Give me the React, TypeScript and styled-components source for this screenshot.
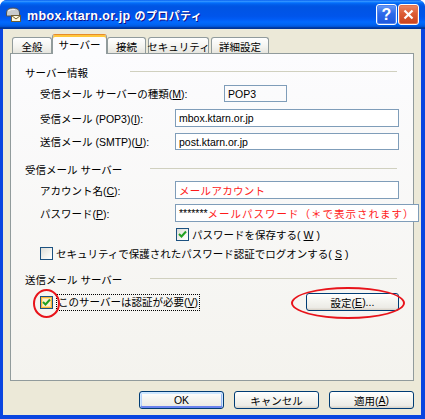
import React from 'react';
import styled, { createGlobalStyle, css } from 'styled-components';

const FONT = `"Liberation Sans", "Noto Sans CJK JP", sans-serif`;

const GlobalStyle = createGlobalStyle`
  html, body {
    margin: 0;
    padding: 0;
    background: #ffffff;
  }
  #root {
    width: 425px;
    height: 419px;
  }
`;

const Window = styled.div`
  width: 425px;
  height: 419px;
  box-sizing: border-box;
  display: flex;
  flex-direction: column;
  background: #0a45e0;
  border-radius: 7px 7px 0 0;
  overflow: hidden;
  font-family: ${FONT};
  font-size: 10.5px;
  color: #000;
`;

const TitleBar = styled.div`
  height: 29px;
  flex-shrink: 0;
  display: flex;
  align-items: center;
  padding: 0 6px 0 5px;
  background: linear-gradient(
    180deg,
    #0058ee 0%,
    #3593ff 4%,
    #288eff 6%,
    #127dff 8%,
    #036ffc 10%,
    #0262ee 14%,
    #0057e5 20%,
    #0054e3 24%,
    #0055eb 56%,
    #005bf5 66%,
    #026afe 76%,
    #0062ef 86%,
    #0052d6 92%,
    #0040ab 94%,
    #003092 100%
  );
`;

const TitleText = styled.span`
  margin-left: 5px;
  color: #fff;
  font-family: ${FONT};
  font-weight: 700;
  font-size: 12.5px;
  letter-spacing: 0.4px;
  text-shadow: 1px 1px 0 #0f1089;
  white-space: nowrap;

  small {
    font-size: 11px;
  }
`;

const CaptionButtons = styled.div`
  margin-left: auto;
  display: flex;
  gap: 1px;
`;

const CaptionButton = styled.div<{ $kind: 'help' | 'close' }>`
  width: 21px;
  height: 21px;
  box-sizing: border-box;
  border: 1px solid #fff;
  border-radius: 3px;
  display: flex;
  align-items: center;
  justify-content: center;
  color: #fff;
  font-family: ${FONT};
  font-weight: 700;
  font-size: 16px;
  ${(p) =>
    p.$kind === 'help'
      ? css`
          background: linear-gradient(180deg, #6a9cf7 0%, #2d69ea 45%, #1f57dc 100%);
          box-shadow: inset 0 0 0 1px #4d82ef;
        `
      : css`
          background: linear-gradient(180deg, #ea8a6a 0%, #dc5d36 45%, #c9431d 100%);
          box-shadow: inset 0 0 0 1px #e3714d;
        `}
`;

const Body = styled.div`
  flex: 1;
  margin: 0 4px 4px 3px;
  background: #ece9d8;
  display: flex;
  flex-direction: column;
  padding: 5px 7px 6px 7px;
  min-height: 0;
`;

const TabRow = styled.div`
  display: flex;
  align-items: flex-end;
  height: 19px;
  padding-left: 2px;
  position: relative;
  z-index: 1;
  flex-shrink: 0;
`;

const Tab = styled.div<{ $w: number; $gap: number; $active?: boolean }>`
  width: ${(p) => p.$w}px;
  margin-left: ${(p) => p.$gap}px;
  box-sizing: border-box;
  display: flex;
  align-items: center;
  justify-content: center;
  border: 1px solid #919b9c;
  border-bottom: none;
  border-radius: 3px 3px 0 0;
  white-space: nowrap;
  ${(p) =>
    p.$active
      ? css`
          height: 20px;
          margin-bottom: -1px;
          padding-bottom: 2px;
          background: #fcfcfe;
          border-top: 1px solid #e68b2c;
          box-shadow: inset 0 2px 0 #ffc73c;
          padding-top: 2px;
        `
      : css`
          height: 16px;
          padding-top: 1px;
          background: linear-gradient(180deg, #ffffff 0%, #f3f3ef 60%, #e6e5de 100%);
        `}
`;

const Panel = styled.div`
  flex: 1;
  border: 1px solid #919b9c;
  background: linear-gradient(180deg, #fcfcfe 0%, #f4f3ee 100%);
  padding: 11px 14px 0 14px;
  display: flex;
  flex-direction: column;
`;

const GroupHeader = styled.div<{ $top?: number }>`
  display: flex;
  align-items: center;
  height: 14px;
  margin-top: ${(p) => p.$top ?? 0}px;
`;

const GroupTitle = styled.span<{ $w: number }>`
  width: ${(p) => p.$w}px;
  flex-shrink: 0;
  white-space: nowrap;
`;

const Rule = styled.div`
  flex: 1;
  height: 1px;
  margin-top: -2px;
  margin-right: 2px;
  background: #d0d0bf;
`;

const Row = styled.div<{ $top: number; $h: number; $indent?: number }>`
  display: flex;
  align-items: center;
  height: ${(p) => p.$h}px;
  margin-top: ${(p) => p.$top}px;
  padding-left: ${(p) => p.$indent ?? 15}px;
`;

const FieldLabel = styled.span<{ $w: number }>`
  width: ${(p) => p.$w}px;
  flex-shrink: 0;
  white-space: nowrap;
`;

const TextBox = styled.div<{ $w?: number; $plain?: boolean }>`
  ${(p) => (p.$w ? `width: ${p.$w}px;` : 'flex: 1;')}
  height: 100%;
  box-sizing: border-box;
  border: 1px solid #7f9db9;
  background: ${(p) => (p.$plain ? 'transparent' : '#ffffff')};
  padding: 0 3px;
  display: flex;
  align-items: center;
  white-space: nowrap;
  overflow: visible;
`;

const Note = styled.span<{ $spread?: number }>`
  color: #ff1a1a;
  font-size: 10.5px;
  letter-spacing: ${(p) => p.$spread ?? 0}px;
`;

const CheckField = styled.label`
  display: flex;
  align-items: center;
  gap: 3px;
  white-space: nowrap;
`;

const CheckBox = styled.span<{ $hot?: boolean }>`
  position: relative;
  width: 13px;
  height: 13px;
  box-sizing: border-box;
  border: 1px solid #1c5180;
  background: linear-gradient(135deg, #dcdcd7 0%, #f4f4f0 60%, #ffffff 100%);
  display: flex;
  align-items: center;
  justify-content: center;
  flex-shrink: 0;
  ${(p) =>
    p.$hot &&
    css`
      background: #fdf3d2;
      box-shadow: inset 0 0 0 1px #f8b636, inset 0 0 0 2px #fedf9c;
    `}
`;

const FocusText = styled.span`
  border: 1px dotted #000;
  padding: 1px;
  line-height: 13px;
`;

const Annotation = styled.span<{ $l: number; $t: number; $w: number; $h: number }>`
  position: absolute;
  left: ${(p) => p.$l}px;
  top: ${(p) => p.$t}px;
  width: ${(p) => p.$w}px;
  height: ${(p) => p.$h}px;
  box-sizing: border-box;
  border: 2px solid #e8141b;
  border-radius: 50%;
  pointer-events: none;
`;

const PushButton = styled.div<{ $w: number; $default?: boolean; $push?: boolean }>`
  position: relative;
  width: ${(p) => p.$w}px;
  height: 18px;
  box-sizing: border-box;
  margin-left: ${(p) => (p.$push ? 'auto' : '0')};
  border: 1px solid #003c74;
  border-radius: 3px;
  background: linear-gradient(180deg, #ffffff 0%, #f4f4f0 45%, #ecebe6 85%, #d6d0c5 100%);
  display: flex;
  align-items: center;
  justify-content: center;
  white-space: nowrap;
  ${(p) =>
    p.$default &&
    css`
      box-shadow: inset 0 1px 0 1px #cee7ff, inset 0 -1px 0 1px #6982ee, inset 1px 0 0 1px #b8d3fa,
        inset -1px 0 0 1px #97b5f1;
    `}
`;

const ButtonRow = styled.div`
  display: flex;
  justify-content: flex-end;
  gap: 10px;
  margin-top: 10px;
  flex-shrink: 0;
`;

const TitleIcon = () => (
  <svg width="17" height="17" viewBox="0 0 17 17">
    <path d="M1.5 7 Q1.5 2 8 2 Q14.5 2 14.5 7 L14.5 10 L1.5 10 Z" fill="#c9cbcc" stroke="#4d5256" />
    <path d="M3 5 Q6 3 10 3.5" fill="none" stroke="#f2f2f2" />
    <rect x="6.5" y="9.5" width="9" height="6" fill="#fff8dc" stroke="#6d5d34" />
    <path d="M6.5 9.5 L11 13 L15.5 9.5" fill="none" stroke="#6d5d34" />
  </svg>
);

const CheckMark = () => (
  <svg width="9" height="9" viewBox="0 0 9 9">
    <path d="M1 4 L3.5 6.5 L8 1.5" fill="none" stroke="#21a121" strokeWidth="2" />
  </svg>
);

const tabs = [
  { label: '全般', w: 40, gap: 0 },
  { label: 'サーバー', w: 55, gap: 0, active: true },
  { label: '接続', w: 39, gap: 0 },
  { label: 'セキュリティ', w: 61, gap: 2 },
  { label: '詳細設定', w: 58, gap: 2 },
];

export default function App() {
  return (
    <>
      <GlobalStyle />
      <Window>
        <TitleBar>
          <TitleIcon />
          <TitleText>
            mbox.ktarn.or.jp <small>のプロパティ</small>
          </TitleText>
          <CaptionButtons>
            <CaptionButton $kind="help">?</CaptionButton>
            <CaptionButton $kind="close">
              <svg width="11" height="11" viewBox="0 0 11 11">
                <path d="M1.5 1.5 L9.5 9.5 M9.5 1.5 L1.5 9.5" stroke="#fff" strokeWidth="2.2" />
              </svg>
            </CaptionButton>
          </CaptionButtons>
        </TitleBar>

        <Body>
          <TabRow>
            {tabs.map((t) => (
              <Tab key={t.label} $w={t.w} $gap={t.gap} $active={t.active}>
                {t.label}
              </Tab>
            ))}
          </TabRow>

          <Panel>
            <GroupHeader>
              <GroupTitle $w={105}>サーバー情報</GroupTitle>
              <Rule />
            </GroupHeader>
            <Row $top={6} $h={17}>
              <FieldLabel $w={184}>
                受信メール サーバーの種類(<u>M</u>):
              </FieldLabel>
              <TextBox $w={63} $plain>
                POP3
              </TextBox>
            </Row>
            <Row $top={7} $h={18}>
              <FieldLabel $w={135}>
                受信メール (POP3)(<u>I</u>):
              </FieldLabel>
              <TextBox>mbox.ktarn.or.jp</TextBox>
            </Row>
            <Row $top={6} $h={17}>
              <FieldLabel $w={135}>
                送信メール (SMTP)(<u>U</u>):
              </FieldLabel>
              <TextBox>post.ktarn.or.jp</TextBox>
            </Row>

            <GroupHeader $top={12}>
              <GroupTitle $w={125}>受信メール サーバー</GroupTitle>
              <Rule />
            </GroupHeader>
            <Row $top={5} $h={18}>
              <FieldLabel $w={135}>
                アカウント名(<u>C</u>):
              </FieldLabel>
              <TextBox>
                <Note $spread={0.3}>メールアカウント</Note>
              </TextBox>
            </Row>
            <Row $top={5} $h={18}>
              <FieldLabel $w={135}>
                パスワード(<u>P</u>):
              </FieldLabel>
              <TextBox>
                *******<Note $spread={1}>メールパスワード（＊で表示されます）</Note>
              </TextBox>
            </Row>
            <Row $top={6} $h={13} $indent={151}>
              <CheckField>
                <CheckBox>
                  <CheckMark />
                </CheckBox>
                パスワードを保存する(<u>W</u>)
              </CheckField>
            </Row>
            <Row $top={6} $h={13}>
              <CheckField>
                <CheckBox />
                セキュリティで保護されたパスワード認証でログオンする(<u>S</u>)
              </CheckField>
            </Row>

            <GroupHeader $top={12}>
              <GroupTitle $w={125}>送信メール サーバー</GroupTitle>
              <Rule />
            </GroupHeader>
            <Row $top={7} $h={18}>
              <CheckField>
                <CheckBox $hot>
                  <CheckMark />
                  <Annotation $l={-8} $t={-8} $w={27} $h={29} />
                </CheckBox>
                <FocusText>
                  このサーバーは認証が必要(<u>V</u>)
                </FocusText>
              </CheckField>
              <PushButton $w={93} $push>
                設定(<u>E</u>)...
                <Annotation $l={-16} $t={-7} $w={114} $h={32} />
              </PushButton>
            </Row>
          </Panel>

          <ButtonRow>
            <PushButton $w={85} $default>
              OK
            </PushButton>
            <PushButton $w={85}>キャンセル</PushButton>
            <PushButton $w={85}>
              適用(<u>A</u>)
            </PushButton>
          </ButtonRow>
        </Body>
      </Window>
    </>
  );
}
